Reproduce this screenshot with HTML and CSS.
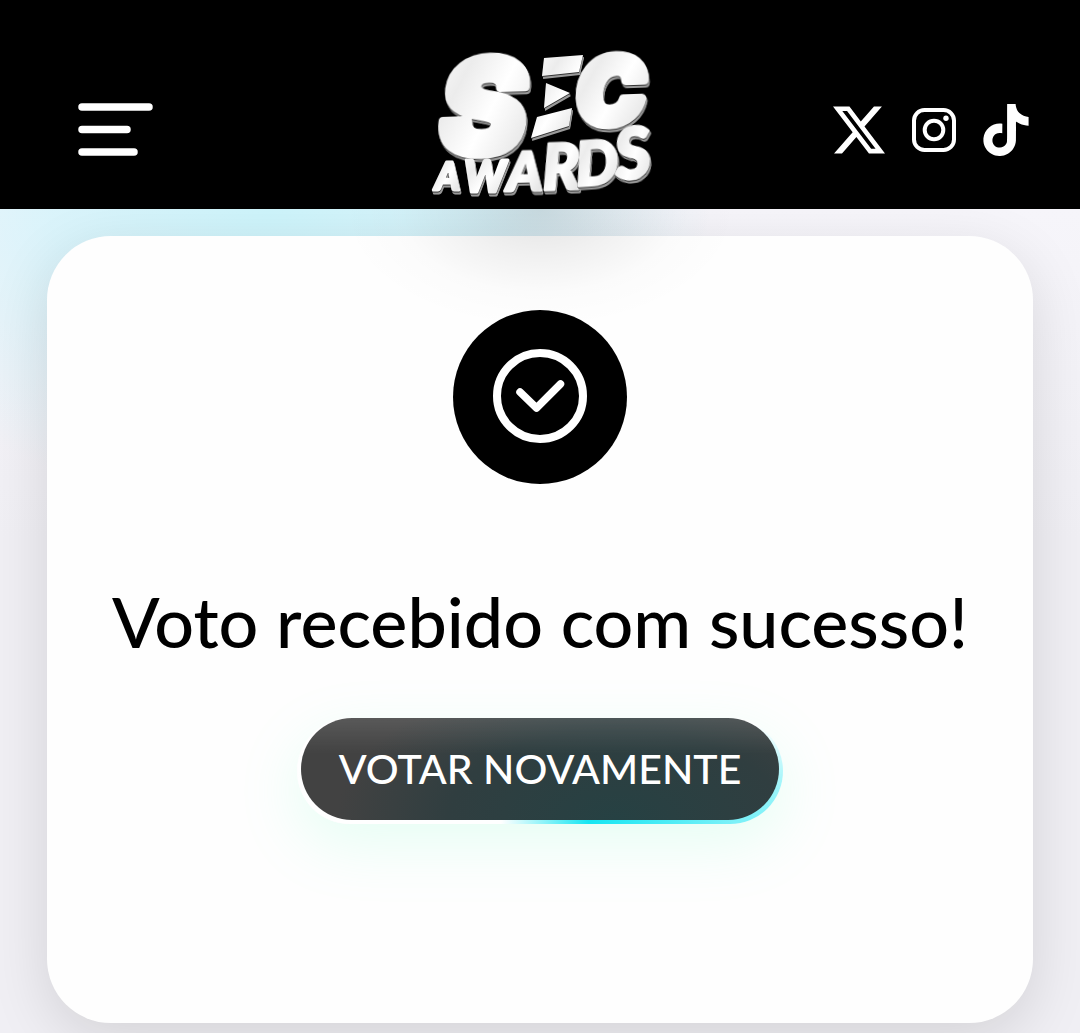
FILE: index.html
```html
<!DOCTYPE html>
<html lang="pt-BR">
<head>
<meta charset="utf-8">
<meta name="viewport" content="width=device-width, initial-scale=1">
<title>SEC Awards</title>
<link rel="stylesheet" href="styles.css">
</head>
<body>
<header class="header">
  <button class="menu" type="button" aria-label="Menu">
    <svg viewBox="0 0 76 54" width="76" height="54"><path d="M4 4H71M4 26.500H49M4 49H56" stroke="#fff" stroke-width="7.500" stroke-linecap="round"/></svg>
  </button>
  <a class="logo" href="#" aria-label="SEC Awards">
    <svg viewBox="0 0 220 148" width="220" height="148">
      <defs>
        <linearGradient id="chrome" x1="0" y1="0" x2="1" y2="1">
          <stop offset="0" stop-color="#fff"/><stop offset=".3" stop-color="#ececec"/>
          <stop offset=".55" stop-color="#fff"/><stop offset=".85" stop-color="#e6e6e6"/><stop offset="1" stop-color="#fff"/>
        </linearGradient>
      </defs>
      <g class="logo-top" fill="url(#chrome)" stroke="url(#chrome)">
        <text class="letter-s" transform="translate(11 105) rotate(-2)">S</text>
        <path d="M114 8 153 5 149 22 112 26ZM116 33 140 43 114 58ZM107 67 142 58 139 76 101 88Z" stroke="none"/>
        <text class="letter-c" transform="translate(147 75) rotate(-2)">C</text>
      </g>
      <g class="logo-bottom" fill="url(#chrome)" stroke="url(#chrome)">
        <text font-size="38" transform="translate(5 140)">A</text>
        <text font-size="43" transform="translate(34 142)">W</text>
        <text font-size="54" transform="translate(77 141) rotate(-1)">A</text>
        <text font-size="62" transform="translate(113 140) rotate(-2)">R</text>
        <text font-size="60" transform="translate(147 136) rotate(-4)">D</text>
        <text font-size="70" transform="translate(187 130) rotate(-6)">S</text>
      </g>
    </svg>
  </a>
  <nav class="social" aria-label="Redes sociais">
    <a href="#" aria-label="X"><svg viewBox="0 1 24 22" width="52" height="48"><path fill="#fff" d="M18.901 1.153h3.680l-8.040 9.190L24 22.846h-7.406l-5.800-7.584-6.638 7.584H.474l8.600-9.830L0 1.154h7.594l5.243 6.932ZM17.610 20.644h2.039L6.486 3.240H4.298Z"/></svg></a>
    <a href="#" aria-label="Instagram"><svg viewBox="0 0 44 44" width="44" height="44"><rect x="2" y="2" width="40" height="40" rx="10.500" fill="none" stroke="#fff" stroke-width="4"/><circle cx="22" cy="22" r="9.300" fill="none" stroke="#fff" stroke-width="4"/><circle cx="34" cy="10.200" r="2.700" fill="#fff"/></svg></a>
    <a href="#" aria-label="TikTok"><svg viewBox="1.500 0 21 24" width="46" height="52"><path fill="#fff" d="M12.525.02c1.310-.02 2.610-.01 3.910-.02.08 1.530.63 3.090 1.750 4.170 1.120 1.110 2.700 1.620 4.240 1.790v4.030c-1.440-.05-2.890-.35-4.200-.97-.57-.26-1.100-.59-1.620-.93-.01 2.920.01 5.840-.02 8.750-.08 1.400-.54 2.790-1.350 3.940-1.310 1.920-3.580 3.170-5.910 3.210-1.430.08-2.860-.31-4.080-1.030-2.020-1.190-3.440-3.370-3.650-5.710-.02-.5-.03-1-.01-1.490.18-1.900 1.120-3.720 2.580-4.960 1.660-1.440 3.980-2.130 6.150-1.720.02 1.480-.04 2.960-.04 4.440-.99-.32-2.150-.23-3.020.37-.63.41-1.110 1.040-1.360 1.750-.21.51-.15 1.070-.14 1.610.24 1.640 1.820 3.020 3.500 2.870 1.120-.01 2.190-.66 2.770-1.610.19-.33.4-.67.41-1.060.1-1.790.06-3.570.07-5.360.01-4.030-.01-8.050.02-12.070z"/></svg></a>
  </nav>
</header>
<main class="page">
  <section class="card">
    <svg class="badge" viewBox="0 0 174 174" width="174" height="174" aria-hidden="true">
      <circle cx="87" cy="87" r="87"/>
      <circle cx="87" cy="86" r="43" fill="none" stroke="#fff" stroke-width="8"/>
      <path d="M67 82 83.500 98 107.500 74" fill="none" stroke="#fff" stroke-width="7.500" stroke-linecap="round" stroke-linejoin="round"/>
    </svg>
    <h1 class="title">Voto recebido com sucesso!</h1>
    <div class="glow">
      <button class="again" type="button">VOTAR NOVAMENTE</button>
    </div>
  </section>
</main>
</body>
</html>
```
FILE: styles.css
```css
* { box-sizing: border-box; }

body {
  margin: 0;
  min-height: 100vh;
  display: flex;
  flex-direction: column;
  font-family: "Lato", "Liberation Sans", sans-serif;
  color: #000;
  background: #f1f0f6;
}

svg { display: block; }

.header {
  position: relative;
  display: grid;
  grid-template-columns: 1fr auto 1fr;
  align-items: center;
  padding: 50px 0 11px;
  background: #000;
}

/* soft shade cast by the logo onto the page */
.header::after {
  content: "";
  position: absolute;
  top: 100%;
  left: 50%;
  width: 400px;
  height: 120px;
  margin-left: -200px;
  background: radial-gradient(200px 120px at 50% 0, rgba(0, 0, 0, 0.110) 0, rgba(0, 0, 0, 0.050) 40%, rgba(0, 0, 0, 0.012) 70%, transparent 100%);
  pointer-events: none;
}

.menu {
  justify-self: start;
  margin: 12px 0 0 78px;
  padding: 0;
  border: 0;
  background: none;
}

.logo svg { overflow: visible; }

.logo-top,
.logo-bottom {
  font-weight: 900;
  font-style: italic;
  stroke-linejoin: round;
}
.logo-top > *,
.logo-bottom > * {
  filter: drop-shadow(0 1px 0 #333) drop-shadow(1px 2px 0 #999);
}
.logo-top { font-family: "Inter", sans-serif; stroke-width: 9px; }
.logo-bottom { font-family: "Lato", sans-serif; stroke-width: 3px; }
.letter-s { font-size: 130px; }
.letter-c { font-size: 92px; }

.social {
  justify-self: end;
  display: flex;
  align-items: center;
  gap: 27px;
  margin: 12px 51px 0 0;
}

.page {
  flex: 1;
  padding: 27px 47px 10px;
  background:
    radial-gradient(440px 300px at 25% 0, #cdf4fb 0, rgba(206, 243, 251, 0.700) 50%, rgba(241, 240, 246, 0) 100%),
    linear-gradient(#f6f5fa, #f0eff4 40%);
}

.card {
  display: flex;
  flex-direction: column;
  align-items: center;
  min-height: 787px;
  padding: 74px 32px;
  border-radius: 64px;
  background: #fefefe;
  box-shadow: 0 16px 60px rgba(0, 0, 0, 0.120);
}

.title {
  margin: 92px 0 0;
  font-size: 70px;
  line-height: 90px;
  font-weight: 500;
  text-align: center;
}

/* cyan rim that shows below and to the right of the button */
.glow {
  margin-top: 52px;
  padding: 0 4px 4px;
  border-radius: 53px;
  background: linear-gradient(90deg, #fff 42%, #16e6f2 60%, #7cf1f8 90%);
  background:
    linear-gradient(to top, transparent 5%, rgba(255, 255, 255, 0.300) 40%, #fff 95%),
    linear-gradient(90deg, #fff 42%, #16e6f2 60%, #7cf1f8 90%);
  box-shadow: 0 20px 60px rgba(120, 255, 200, 0.180);
}

.again {
  display: block;
  padding: 0 38px;
  border: 0;
  border-radius: 51px;
  font-family: inherit;
  font-size: 41px;
  line-height: 102px;
  font-weight: 500;
  color: #fff;
  background:
    linear-gradient(rgba(255, 255, 255, 0.120), transparent 35%),
    radial-gradient(280px 150px at 66% 100%, #264143, #303e40 60%, #424242 100%);
}
```
